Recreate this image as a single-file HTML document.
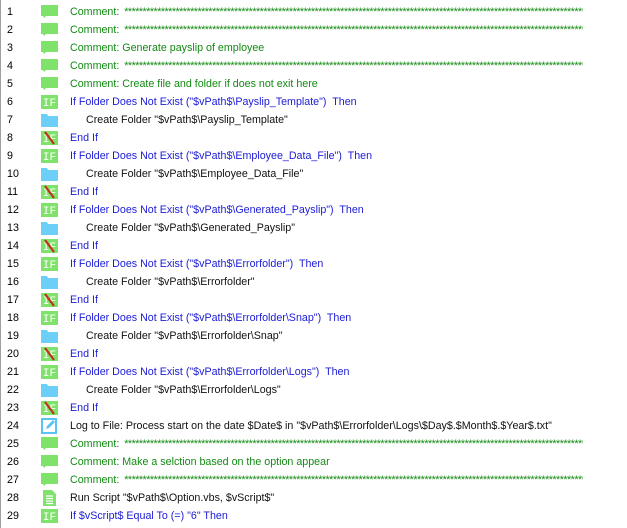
<!DOCTYPE html>
<html><head><meta charset="utf-8"><style>
body{margin:0;width:627px;height:528px;background:#fff;overflow:hidden;font-family:"Liberation Sans",sans-serif;font-size:10.7px;position:relative}
.bl{position:absolute;left:0;top:0;width:1px;height:528px;background:#a0a0a0}
.r{position:absolute;left:0;height:18px;width:627px;line-height:18px;white-space:nowrap}
.n{position:absolute;left:7px;color:#000}
.i{position:absolute;left:41px;top:2px;width:17px;height:14px}
.t{position:absolute;left:70px}
.t2{left:86px}
.c{color:#138a13}.b{color:#1c1cd6}.k{color:#111}
.st{display:inline-block;width:459px;overflow:hidden;vertical-align:top;letter-spacing:-0.5px;margin-left:2px}
</style></head><body>
<div class="bl"></div>
<div id="rows"></div>
<script>
var S='*'.repeat(200);
var C='<svg class="i" viewBox="0 0 17 14"><rect x="0" y="0" width="17" height="11" fill="#7fe36b"/><path d="M2 11h3l-2 2z" fill="#7fe36b"/></svg>';
var I='<svg class="i" viewBox="0 0 17 14"><rect width="17" height="14" fill="#7fe36b"/><text x="8.5" y="11" font-size="11" fill="#fff" text-anchor="middle" font-family="Liberation Mono,monospace">IF</text></svg>';
var E='<svg class="i" viewBox="0 0 17 14"><rect width="17" height="14" fill="#7fe36b"/><text x="8.5" y="11" font-size="11" fill="#fff" text-anchor="middle" font-family="Liberation Mono,monospace">IF</text><path d="M4 1L13 13" stroke="#c0301a" stroke-width="2.2"/></svg>';
var F='<svg class="i" viewBox="0 0 17 14"><path d="M0 1h6l1 2h10v11H0z" fill="#6ccff8"/></svg>';
var L='<svg class="i" viewBox="0 0 17 16" style="height:16px;top:1px"><rect x="1" y="1" width="14" height="14" fill="none" stroke="#5ac3f5" stroke-width="2"/><path d="M5 11l1-3 6-6 2 2-6 6z" fill="#5ac3f5"/></svg>';
var R='<svg class="i" viewBox="0 0 17 16" style="height:16px;top:1px"><path d="M2 0h9l4 4v12H2z" fill="#7fe36b"/><path d="M5 6h7M5 8.5h7M5 11h7M5 13.5h7" stroke="#fff" stroke-width="1.2"/></svg>';
var d=[
[C,'c','Comment: <span class="st">'+S+'</span>'],
[C,'c','Comment: <span class="st">'+S+'</span>'],
[C,'c','Comment: Generate payslip of employee'],
[C,'c','Comment: <span class="st">'+S+'</span>'],
[C,'c','Comment: Create file and folder if does not exit here'],
[I,'b','If Folder Does Not Exist ("$vPath$\\Payslip_Template")&nbsp; Then'],
[F,'k t2','Create Folder "$vPath$\\Payslip_Template"'],
[E,'b','End If'],
[I,'b','If Folder Does Not Exist ("$vPath$\\Employee_Data_File")&nbsp; Then'],
[F,'k t2','Create Folder "$vPath$\\Employee_Data_File"'],
[E,'b','End If'],
[I,'b','If Folder Does Not Exist ("$vPath$\\Generated_Payslip")&nbsp; Then'],
[F,'k t2','Create Folder "$vPath$\\Generated_Payslip"'],
[E,'b','End If'],
[I,'b','If Folder Does Not Exist ("$vPath$\\Errorfolder")&nbsp; Then'],
[F,'k t2','Create Folder "$vPath$\\Errorfolder"'],
[E,'b','End If'],
[I,'b','If Folder Does Not Exist ("$vPath$\\Errorfolder\\Snap")&nbsp; Then'],
[F,'k t2','Create Folder "$vPath$\\Errorfolder\\Snap"'],
[E,'b','End If'],
[I,'b','If Folder Does Not Exist ("$vPath$\\Errorfolder\\Logs")&nbsp; Then'],
[F,'k t2','Create Folder "$vPath$\\Errorfolder\\Logs"'],
[E,'b','End If'],
[L,'k','Log to File: Process start on the date $Date$ in "$vPath$\\Errorfolder\\Logs\\$Day$.$Month$.$Year$.txt"'],
[C,'c','Comment: <span class="st">'+S+'</span>'],
[C,'c','Comment: Make a selction based on the option appear'],
[C,'c','Comment: <span class="st">'+S+'</span>'],
[R,'k','Run Script "$vPath$\\Option.vbs, $vScript$"'],
[I,'b','If $vScript$ Equal To (=) "6" Then']
];
var h='';
d.forEach(function(x,j){h+='<div class="r" style="top:'+(3+j*18)+'px"><span class="n">'+(j+1)+'</span>'+x[0]+'<span class="t '+x[1]+'">'+x[2]+'</span></div>';});
document.getElementById('rows').innerHTML=h;
</script>
</body></html>
